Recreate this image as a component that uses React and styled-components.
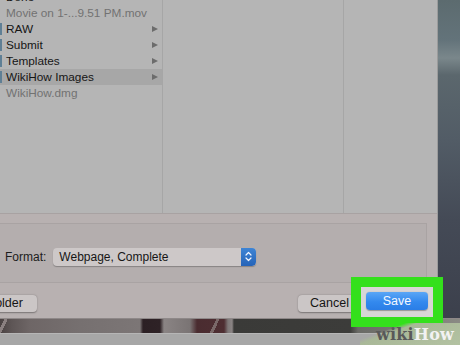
import React from "react";
import styled, { createGlobalStyle } from "styled-components";

const Global = createGlobalStyle`
  html, body { margin: 0; padding: 0; background: #3e4250; }
  body { font-family: "Liberation Sans", Arial, sans-serif; }
`;

const Screen = styled.div`
  position: relative;
  width: 460px;
  height: 345px;
  overflow: hidden;
  display: grid;
  grid-template-columns: 438px 1fr;
  grid-template-rows: 318px 27px;
`;

const Dialog = styled.div`
  display: flex;
  flex-direction: column;
  background: #b5b5b5;
  border-right: 1px solid #9c9c9c;
  min-width: 0;
`;

const Desktop = styled.div`
  background: linear-gradient(
    180deg,
    #5c6b6f 0px,
    #63737a 40px,
    #7a878b 58px,
    #5b676d 75px,
    #525c66 140px,
    #444a56 220px,
    #3c404c 318px
  );
`;

const Browser = styled.div`
  height: 217px;
  display: flex;
  overflow: hidden;
`;

const Column = styled.div`
  width: ${(p) => (p.$w ? `${p.$w}px` : "auto")};
  flex: ${(p) => (p.$w ? "none" : "1")};
  border-right: ${(p) => (p.$last ? "none" : "1px solid #a6a6a6")};
  background: #b5b5b5;
  overflow: hidden;
`;

const List = styled.ul`
  list-style: none;
  margin: -11px 0 0 0;
  padding: 0;
`;

const Row = styled.li`
  position: relative;
  height: 16px;
  display: flex;
  align-items: center;
  justify-content: space-between;
  padding: 0 4px 0 6px;
  font-size: 11.8px;
  color: ${(p) => (p.$dim ? "#727272" : "#151515")};
  background: ${(p) => (p.$selected ? "#a7a7a7" : "transparent")};
  white-space: nowrap;
`;

const FolderEdge = styled.span`
  position: absolute;
  left: 0;
  top: 2px;
  width: 2px;
  height: 12px;
  background: #5f7f95;
`;

const Arrow = styled.span`
  width: 0;
  height: 0;
  border-top: 3.5px solid transparent;
  border-bottom: 3.5px solid transparent;
  border-left: 6px solid #6c6c6c;
`;

const Panel = styled.div`
  flex: 1;
  display: flex;
  flex-direction: column;
  gap: 4px;
  padding: 9px 0 1px 0;
  background: #b8b1b1;
  border-top: 1px solid #a8a2a2;
`;

const OptionsBox = styled.div`
  height: 50px;
  margin: 0 10px 0 -10px;
  display: flex;
  align-items: center;
  gap: 7px;
  padding: 8px 0 0 14px;
  background: #b4aeae;
  border: 1px solid #a9a3a3;
  box-sizing: content-box;
`;

const Label = styled.span`
  font-size: 12px;
  color: #1c1c1c;
`;

const Popup = styled.div`
  width: 203px;
  height: 18px;
  display: flex;
  align-items: center;
  justify-content: space-between;
  background: #cdc8c8;
  border-radius: 4px;
  box-shadow: 0 1px 1px rgba(0, 0, 0, 0.25);
  font-size: 12px;
  color: #161616;
  padding-left: 6px;
  box-sizing: border-box;
  overflow: hidden;
`;

const Stepper = styled.span`
  width: 15px;
  height: 19px;
  margin-top: -1px;
  display: flex;
  align-items: center;
  justify-content: center;
  background: linear-gradient(180deg, #3f86d6, #2563b8);
  border-radius: 0 4px 4px 0;
`;

const ButtonRow = styled.div`
  height: 30px;
  display: flex;
  align-items: center;
  justify-content: space-between;
  padding-right: 4px;
`;

const Button = styled.button`
  height: 17px;
  width: ${(p) => p.$w}px;
  margin-left: ${(p) => p.$ml || 0}px;
  margin-top: 2px;
  padding: 0;
  border: none;
  border-radius: 4px;
  background: #cbc6c6;
  box-shadow: 0 0.5px 1.5px rgba(0, 0, 0, 0.35);
  font-family: "Liberation Sans", Arial, sans-serif;
  font-size: 12.5px;
  color: #151515;
  text-align: ${(p) => p.$align || "center"};
  padding-left: ${(p) => p.$pl || 0}px;
`;

const RightGroup = styled.div`
  display: flex;
  align-items: center;
  gap: 1px;
`;

const Spotlight = styled.div`
  width: 72px;
  height: 30px;
  box-sizing: border-box;
  padding: 4px 5px 8px 5px;
  background: #d8d6d6;
  outline: 10px solid #34e01c;
  position: relative;
  z-index: 2;
`;

const SaveButton = styled.button`
  width: 62px;
  height: 18px;
  padding: 0;
  border: none;
  border-radius: 4px;
  background: linear-gradient(180deg, #5aa6f6 0%, #3389ee 55%, #2a7de6 100%);
  box-shadow: 0 0.5px 1px rgba(0, 0, 0, 0.3);
  font-family: "Liberation Sans", Arial, sans-serif;
  font-size: 12.5px;
  color: #f4f8ff;
`;

const Ground = styled.div`
  grid-column: 1 / 3;
  display: flex;
  flex-direction: column;
`;

const PhotoBand = styled.div`
  height: 15px;
  border-top: 1px solid #8e8888;
  box-sizing: border-box;
  background:
    linear-gradient(115deg, transparent 0 4px, #8a8080 4px 7px, transparent 7px 196px, #7a6868 196px 199px, transparent 199px),
    linear-gradient(
      90deg,
      #4a4242 0px,
      #5e5656 12px,
      #6e6666 30px,
      #767070 80px,
      #7c7676 140px,
      #2c2024 143px,
      #2e2226 160px,
      #8a8484 164px,
      #7a7474 190px,
      #4a2c30 197px,
      #4e2e32 224px,
      #7e7878 228px,
      #8a8484 232px,
      #3a3a38 234px,
      #3c3c3a 350px,
      #6a6a66 358px,
      #8a8a84 460px
    );
`;

const Floor = styled.div`
  flex: 1;
  background: #a7a7a7;
  border-top: 1px solid #b6b6b6;
`;

const Watermark = styled.div`
  position: absolute;
  right: 0;
  bottom: 0;
  width: 100px;
  height: 22px;
  display: flex;
  align-items: center;
  justify-content: flex-end;
  padding-right: 6px;
  box-sizing: border-box;
  background: linear-gradient(160deg, rgba(170, 185, 150, 0) 0%, rgba(170, 185, 150, 0) 28%, #a9b898 36%, #b3c2a2 100%);
  font-family: "DejaVu Serif", "Liberation Serif", serif;
  font-weight: bold;
  font-size: 16px;
  letter-spacing: 0.2px;
  z-index: 3;
`;

const Wiki = styled.span`
  color: #595959;
`;
const How = styled.span`
  color: #f2f2f2;
`;

const items = [
  { name: "Done" },
  { name: "Movie on 1-...9.51 PM.mov", dim: true, file: true },
  { name: "RAW" },
  { name: "Submit" },
  { name: "Templates" },
  { name: "WikiHow Images", selected: true },
  { name: "WikiHow.dmg", dim: true, file: true },
];

export default function App() {
  return (
    <>
      <Global />
      <Screen>
        <Dialog>
          <Browser>
            <Column $w={162}>
              <List>
                {items.map((it) => (
                  <Row key={it.name} $dim={it.dim} $selected={it.selected}>
                    {!it.file && it.name !== "Done" && <FolderEdge />}
                    <span>{it.name}</span>
                    {!it.file && <Arrow />}
                  </Row>
                ))}
              </List>
            </Column>
            <Column $w={180} />
            <Column $last />
          </Browser>
          <Panel>
            <OptionsBox>
              <Label>Format:</Label>
              <Popup>
                <span>Webpage, Complete</span>
                <Stepper>
                  <svg width="7" height="11" viewBox="0 0 7 11" fill="none" stroke="#f2f6ff" strokeWidth="1.2" strokeLinecap="round" strokeLinejoin="round">
                    <path d="M1 4 L3.5 1.5 L6 4" />
                    <path d="M1 7 L3.5 9.5 L6 7" />
                  </svg>
                </Stepper>
              </Popup>
            </OptionsBox>
            <ButtonRow>
              <Button $w={92} $ml={-55}>New Folder</Button>
              <RightGroup>
                <Button $w={62} $align="left" $pl={12}>Cancel</Button>
                <Spotlight>
                  <SaveButton>Save</SaveButton>
                </Spotlight>
              </RightGroup>
            </ButtonRow>
          </Panel>
        </Dialog>
        <Desktop />
        <Ground>
          <PhotoBand />
          <Floor />
        </Ground>
        <Watermark>
          <Wiki>wiki</Wiki>
          <How>How</How>
        </Watermark>
      </Screen>
    </>
  );
}
